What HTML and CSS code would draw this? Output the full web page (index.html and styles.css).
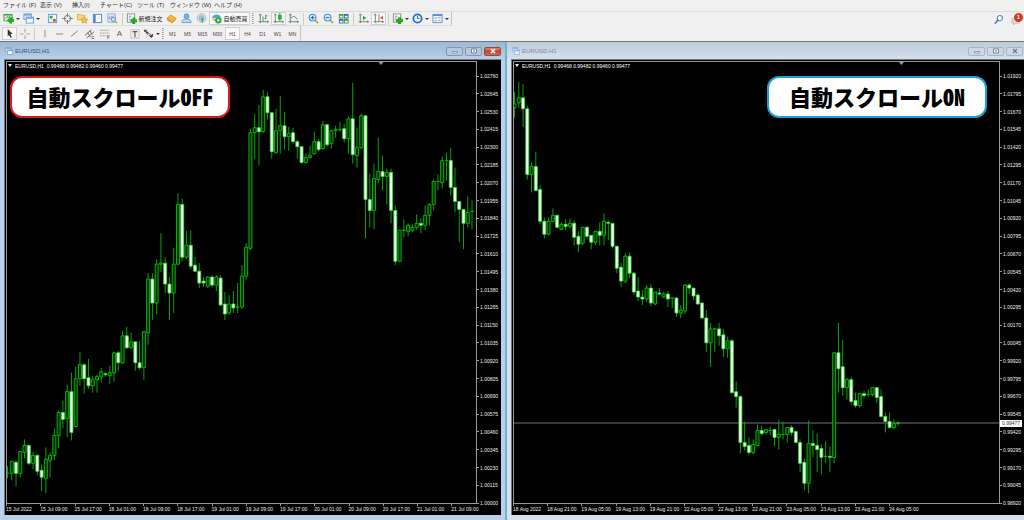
FILE: index.html
```html
<!DOCTYPE html>
<html lang="ja">
<head>
<meta charset="utf-8">
<title>EURUSD,H1</title>
<link rel="stylesheet" href="styles.css">
</head>
<body>
<svg class="defs" aria-hidden="true">
  <symbol id="axes" viewBox="0 0 12 12"><path d="M2.500 1v10M0.500 9.500h11M1.500 2.500l1-1.500 1 1.500M10 8.500l1.500 1-1.500 1" fill="none" stroke="#777"/></symbol>
  <symbol id="plus" viewBox="0 0 6 6"><path d="M2 0h2v2h2v2H4v2H2V4H0V2h2z" fill="#18b818" stroke="#078607" stroke-width=".5"/></symbol>
  <symbol id="doc" viewBox="0 0 12 12"><rect x="1.500" y="1" width="8" height="9" fill="#fff" stroke="#7f8c86"/><path d="M3 3.500h3M3 5.500h2M3 7.500h4" stroke="#789"/></symbol>
  <symbol id="win" viewBox="0 0 12 12"><rect x="1" y="1" width="8" height="6" fill="#e9f3ff" stroke="#6b9bd8"/><path d="M1 2h8" stroke="#6b9bd8" stroke-width="1.500"/><rect x="3.500" y="4.500" width="8" height="6.500" fill="#f6faff" stroke="#6b9bd8"/><path d="M3.500 5.500h8" stroke="#6b9bd8" stroke-width="1.500"/></symbol>
</svg>
<header class="bars">
  <nav class="menu">
    <button>ファイル (F)</button><button>表示 (V)</button><button>挿入(I)</button><button>チャート(C)</button><button>ツール (T)</button><button>ウィンドウ (W)</button><button>ヘルプ (H)</button>
  </nav>
  <div class="row">
    <div class="tools tools-main">
      <button class="tool drop" aria-label="新規チャート"><svg class="ic" viewBox="0 0 12 12"><rect x="1" y="1.500" width="9" height="7" fill="#dff0dc" stroke="#4a9a52"/><path d="M1 2h9" stroke="#4a9a52" stroke-width="1.500"/><path d="M2.500 6l2-2 1.500 1 2-2" fill="none" stroke="#2a8a35"/><use href="#plus" x="5" y="4.500" width="7" height="7"/></svg></button>
      <button class="tool drop" aria-label="プロファイル"><svg class="ic"><use href="#win"/></svg></button>
      <span class="gap"></span>
      <button class="tool" aria-label="気配値"><svg class="ic" viewBox="0 0 12 12"><rect x="1.500" y="1.500" width="9" height="9" fill="#eef6ff" stroke="#5b9bd5"/><path d="M3 3h3v3H3z" fill="#22ad36"/><path d="M6.500 6.500h3v3h-3z" fill="#e0492c"/></svg></button>
      <button class="tool" aria-label="データウィンドウ"><svg class="ic" viewBox="0 0 12 12"><circle cx="6" cy="6" r="3.500" fill="none" stroke="#777"/><path d="M6 0v4.500M6 7.500V12M0 6h4.500M7.500 6H12" stroke="#777"/></svg></button>
      <button class="tool" aria-label="ナビゲーター"><svg class="ic" viewBox="0 0 12 12"><path d="M0.500 1.500h3l1 1h4v5h-8z" fill="#f8da70" stroke="#c99b28" stroke-width=".7"/><path d="M8 4l1.200 2.500 2.600.3-1.900 1.800.5 2.600L8 9.900l-2.400 1.300.5-2.600-1.900-1.800 2.600-.3z" fill="#f9c92e" stroke="#bd8813" stroke-width=".6"/></svg></button>
      <button class="tool" aria-label="ターミナル"><svg class="ic" viewBox="0 0 12 12"><rect x="1.500" y="1.500" width="9" height="9" fill="#fff" stroke="#4e7fc2"/><path d="M3 2v8" stroke="#4e7fc2" stroke-width="2"/><path d="M6 4h3M6 6h3" stroke="#b8cdea" stroke-width=".7"/></svg></button>
      <button class="tool" aria-label="ストラテジーテスター"><svg class="ic" viewBox="0 0 12 12"><rect x="1" y="1" width="8" height="9" fill="#e8f1fa" stroke="#86a9cf"/><path d="M2.500 7V4M4.500 7V3M6.500 6V3" stroke="#6a8fb8"/><circle cx="7" cy="7" r="2.300" fill="#cfe6fa" stroke="#5f86b5"/><path d="M8.500 8.500l2.500 2.500" stroke="#d7a52d" stroke-width="1.500"/></svg></button>
      <span class="sep"></span>
      <button class="tool label order"><svg class="ic" viewBox="0 0 12 12"><use href="#doc"/><use href="#plus" x="5" y="5" width="7" height="7"/></svg>新規注文</button>
      <button class="tool" aria-label="MetaEditor"><svg class="ic" viewBox="0 0 12 12"><path d="M1 6l4-4 6 4-4 4z" fill="#f4bd38" stroke="#bd7c0a" stroke-width=".7"/><path d="M1 6v1.800l6 3.400 4-4V6l-4 4z" fill="#d9922a"/></svg></button>
      <button class="tool" aria-label="MQL5コミュニティ"><svg class="ic" viewBox="0 0 12 12"><circle cx="6" cy="3.500" r="2.700" fill="#6db4ec" stroke="#2f7fc4" stroke-width=".6"/><path d="M1 10.500c-.5-3 2-4 5-4s5.500 1 5 4z" fill="#b8d9f4" stroke="#5791c4" stroke-width=".8"/></svg></button>
      <button class="tool" aria-label="シグナル"><svg class="ic" viewBox="0 0 12 12"><circle cx="6" cy="5.500" r="4.700" fill="#dbe6ee" stroke="#a3b4c0"/><circle cx="6" cy="5.500" r="2.600" fill="#a5c5e2" stroke="#6b95b8" stroke-width=".6"/><path d="M6 5v6l2-2V5.500z" fill="#37b34a"/></svg></button>
      <button class="tool label auto on"><svg class="ic" viewBox="0 0 12 12"><path d="M1 5.500C2 1 9 0 11 5z" fill="#4b9fd9"/><path d="M0 5.500c4 1.500 8 1 12-.5L10.500 8 4 9z" fill="#e4b63b"/><circle cx="8" cy="8" r="3.500" fill="#1fae35"/><path d="M7 6l3 2-3 2z" fill="#fff"/></svg>自動売買</button>
      <span class="grip"></span>
      <button class="tool" aria-label="バーチャート"><svg class="ic" viewBox="0 0 12 12"><use href="#axes"/><path d="M5.500 4v5M8.500 2v5M8.500 3h1.500M7 6h1.500" stroke="#2aa045"/></svg></button>
      <button class="tool on" aria-label="ローソク足"><svg class="ic" viewBox="0 0 12 12"><use href="#axes"/><path d="M7.500 0v9" stroke="#168b20"/><rect x="5.500" y="2" width="4" height="5" fill="#1fb52e"/></svg></button>
      <button class="tool" aria-label="ラインチャート"><svg class="ic" viewBox="0 0 12 12"><use href="#axes"/><path d="M3 6c3-4 5-2 7 1" fill="none" stroke="#2aa045"/></svg></button>
      <span class="sep"></span>
      <button class="tool" aria-label="拡大"><svg class="ic" viewBox="0 0 12 12"><path d="M7.500 7.500l3.500 3.500" stroke="#d5a531" stroke-width="2"/><circle cx="5" cy="5" r="3.700" fill="#d8efff" stroke="#4b8fd0" stroke-width="1.200"/><path d="M5 3v4M3 5h4" stroke="#2470b8" stroke-width="1.200"/></svg></button>
      <button class="tool" aria-label="縮小"><svg class="ic" viewBox="0 0 12 12"><path d="M7.500 7.500l3.500 3.500" stroke="#d5a531" stroke-width="2"/><circle cx="5" cy="5" r="3.700" fill="#d8efff" stroke="#4b8fd0" stroke-width="1.200"/><path d="M3 5h4" stroke="#2470b8" stroke-width="1.200"/></svg></button>
      <button class="tool" aria-label="整列"><svg class="ic" viewBox="0 0 12 12"><path d="M1 1h5v5H1zM6.500 6.500h5v5h-5z" fill="#3fa43c"/><path d="M6.500 1h5v5h-5zM1 6.500h5v5H1z" fill="#3868c8"/><path d="M2 3h3v2H2zM7.500 3h3v2h-3zM2 8.500h3v2H2zM7.500 8.500h3v2h-3z" fill="#e9f4ee"/></svg></button>
      <span class="sep"></span>
      <button class="tool" aria-label="自動スクロール"><svg class="ic" viewBox="0 0 12 12"><use href="#axes"/><path d="M5.500 3l3.500 2.500L5.500 8z" fill="#25a53a"/></svg></button>
      <button class="tool on" aria-label="チャートシフト"><svg class="ic" viewBox="0 0 12 12"><use href="#axes"/><path d="M6.500 1v8" stroke="#777"/><path d="M11 3L7.500 5.500 11 7z" fill="#d84a37"/></svg></button>
      <span class="sep"></span>
      <button class="tool drop" aria-label="インディケータ"><svg class="ic" viewBox="0 0 12 12"><use href="#doc"/><use href="#plus" x="4.500" y="4.500" width="7.500" height="7.500"/></svg></button>
      <button class="tool drop" aria-label="時間軸"><svg class="ic" viewBox="0 0 12 12"><circle cx="6" cy="6" r="4.500" fill="#e6f3ff" stroke="#2573c4" stroke-width="2"/><path d="M6 3v3h2" fill="none" stroke="#357"/></svg></button>
      <button class="tool drop" aria-label="定型チャート"><svg class="ic" viewBox="0 0 12 12"><rect x="1" y="1.500" width="10" height="9" fill="#f2f8ff" stroke="#5c8fd0"/><path d="M1 2.500h10" stroke="#5c8fd0" stroke-width="1.500"/><path d="M2.500 5.500h3M6.500 5h3M2.500 8.500h3M6.500 8h3" stroke="#7fa3c8"/></svg></button>
    </div>
    <div class="status">
      <button class="tool" aria-label="検索"><svg class="ic" viewBox="0 0 12 12"><circle cx="7.500" cy="4.500" r="2.800" fill="#fff" stroke="#4c7fe0" stroke-width="1.200"/><path d="M5.500 6.500L2 10.500" stroke="#3d6bd2" stroke-width="1.600"/></svg></button>
      <button class="tool chat" aria-label="通知"><svg class="ic" viewBox="0 0 12 12"><path d="M1 5h8v5H5l-2 2v-2H1z" fill="#dadada" stroke="#aaa" stroke-width=".6"/></svg><span class="badge">1</span></button>
    </div>
  </div>
  <div class="row">
    <div class="tools tools-draw">
      <button class="tool on" aria-label="カーソル"><svg class="ic" viewBox="0 0 12 12"><path d="M4 1l5.500 5.500H7l1.500 3.500-1.500.7L5.500 7.500 4 9z" fill="#333"/></svg></button>
      <button class="tool" aria-label="クロスヘア"><svg class="ic" viewBox="0 0 12 12"><path d="M6.500 1v4M6.500 8v4M1 6.500h4M8 6.500h4" stroke="#999"/></svg></button>
      <span class="sep"></span>
      <button class="tool" aria-label="垂直線"><svg class="ic" viewBox="0 0 12 12"><path d="M6.500 2v8" stroke="#888"/></svg></button>
      <button class="tool" aria-label="水平線"><svg class="ic" viewBox="0 0 12 12"><path d="M2 6.500h8" stroke="#888"/></svg></button>
      <button class="tool" aria-label="トレンドライン"><svg class="ic" viewBox="0 0 12 12"><path d="M2 9.500L9.500 3" stroke="#777"/></svg></button>
      <button class="tool" aria-label="チャネル"><svg class="ic" viewBox="0 0 12 12"><path d="M1 8l7-6M3 11l8-7M4 5l3 5M6.500 3l2 4" stroke="#666"/><path d="M8 9.500h3M8 11.500h3" stroke="#555" stroke-width=".8"/></svg></button>
      <button class="tool" aria-label="フィボナッチ"><svg class="ic" viewBox="0 0 12 12"><path d="M1 2.500h10M1 5.500h10M1 8.500h7" stroke="#888" stroke-dasharray="1 .6"/><path d="M9.500 8v4M9.500 8.500h2M9.500 10h2" stroke="#666" stroke-width=".8"/></svg></button>
      <button class="tool glyph">A</button>
      <button class="tool" aria-label="ラベル"><svg class="ic" viewBox="0 0 12 12"><rect x="2" y="2" width="9" height="9" fill="none" stroke="#999" stroke-dasharray="1 1"/><path d="M4 4h5M6.500 4v6" stroke="#555" stroke-width="1.200"/></svg></button>
      <button class="tool drop" aria-label="矢印"><svg class="ic" viewBox="0 0 12 12"><path d="M1 2h3v2h2v2H3V4H1zM6 8h3l2-2v3l-2 2z" fill="#444"/><path d="M4 8l2-2 3 1" fill="none" stroke="#666"/></svg></button>
      <span class="grip"></span>
      <button class="tool tf">M1</button><button class="tool tf">M5</button><button class="tool tf">M15</button><button class="tool tf">M30</button><button class="tool tf on">H1</button><button class="tool tf">H4</button><button class="tool tf">D1</button><button class="tool tf">W1</button><button class="tool tf">MN</button>
    </div>
  </div>
</header>
<main class="desk">
  <section class="window active">
    <div class="title"><svg class="ticon"><use href="#win"/></svg><h2>EURUSD,H1</h2>
      <div class="controls"><button aria-label="最小化"><svg viewBox="0 0 8 6"><path d="M1.500 3.500h5v1.500h-5z" fill="#fff" stroke="#667" stroke-width=".6"/></svg></button><button aria-label="最大化"><svg viewBox="0 0 8 6"><path d="M1.500 1h5v4h-5z" fill="#fff" stroke="#667" stroke-width=".8"/><path d="M3 3h2" stroke="#667"/></svg></button><button class="close" aria-label="閉じる"><svg viewBox="0 0 8 6"><path d="M2 1l4 4M6 1L2 5" stroke="#fff" stroke-width="1.500"/></svg></button></div>
    </div>
    <div class="chart">
      <div class="plot">
        <svg id="chart-off" class="candles" viewBox="6 61 471 443" preserveAspectRatio="none"><path d="M379 61h5l-2.500 3z" fill="#8a9bb0"/></svg>
        <div class="over"><p class="quote"><i></i>EURUSD,H1&nbsp; 0.99468 0.99482 0.99460 0.99477</p>
        <p class="callout off">自動スクロール<span>OFF</span></p></div>
      </div>
      <div class="prices"><span>1.02760</span><span>1.02645</span><span>1.02530</span><span>1.02415</span><span>1.02300</span><span>1.02185</span><span>1.02070</span><span>1.01955</span><span>1.01840</span><span>1.01725</span><span>1.01610</span><span>1.01495</span><span>1.01380</span><span>1.01265</span><span>1.01150</span><span>1.01035</span><span>1.00920</span><span>1.00805</span><span>1.00690</span><span>1.00575</span><span>1.00460</span><span>1.00345</span><span>1.00230</span><span>1.00115</span><span>1.00000</span></div>
      <div class="times"><span>15 Jul 2022</span><span>15 Jul 09:00</span><span>15 Jul 17:00</span><span>18 Jul 01:00</span><span>18 Jul 09:00</span><span>18 Jul 17:00</span><span>19 Jul 01:00</span><span>19 Jul 09:00</span><span>19 Jul 17:00</span><span>20 Jul 01:00</span><span>20 Jul 09:00</span><span>20 Jul 17:00</span><span>21 Jul 01:00</span><span>21 Jul 09:00</span></div>
    </div>
  </section>
  <section class="window idle">
    <div class="title"><svg class="ticon"><use href="#win"/></svg><h2>EURUSD,H1</h2>
      <div class="controls"><button aria-label="最小化"><svg viewBox="0 0 8 6"><path d="M1.500 3.500h5v1.500h-5z" fill="#fff" stroke="#667" stroke-width=".6"/></svg></button><button aria-label="最大化"><svg viewBox="0 0 8 6"><path d="M1.500 1h5v4h-5z" fill="#fff" stroke="#667" stroke-width=".8"/><path d="M3 3h2" stroke="#667"/></svg></button><button aria-label="閉じる"><svg viewBox="0 0 8 6"><path d="M2 1l4 4M6 1L2 5" stroke="#778" stroke-width="1.200"/></svg></button></div>
    </div>
    <div class="chart">
      <div class="plot">
        <svg id="chart-on" class="candles" viewBox="512 61 487 443" preserveAspectRatio="none"><path d="M898.500 61h5l-2.500 3z" fill="#8a9bb0"/><path d="M512 423.500h487" stroke="#707988"/></svg>
        <div class="over"><p class="quote"><i></i>EURUSD,H1&nbsp; 0.99468 0.99482 0.99460 0.99477</p>
        <p class="callout live">自動スクロール<span>ON</span></p></div>
      </div>
      <div class="prices"><span>1.01920</span><span>1.01795</span><span>1.01670</span><span>1.01545</span><span>1.01420</span><span>1.01295</span><span>1.01170</span><span>1.01045</span><span>1.00920</span><span>1.00795</span><span>1.00670</span><span>1.00545</span><span>1.00420</span><span>1.00295</span><span>1.00170</span><span>1.00045</span><span>0.99920</span><span>0.99795</span><span>0.99670</span><span>0.99545</span><span>0.99420</span><span>0.99295</span><span>0.99170</span><span>0.99045</span><span>0.98920</span><b class="now">0.99477</b></div>
      <div class="times"><span>18 Aug 2022</span><span>18 Aug 21:00</span><span>19 Aug 05:00</span><span>19 Aug 13:00</span><span>19 Aug 21:00</span><span>22 Aug 05:00</span><span>22 Aug 13:00</span><span>22 Aug 21:00</span><span>23 Aug 05:00</span><span>23 Aug 13:00</span><span>23 Aug 21:00</span><span>24 Aug 05:00</span></div>
    </div>
  </section>
</main>
<script src="chart.js"></script>
</body>
</html>
```
FILE: styles.css
```css
* { box-sizing: border-box; }
body {
  margin: 0;
  height: 100vh;
  display: grid;
  grid-template-rows: auto minmax(0, 1fr);
  overflow: hidden;
  background: #f0f0f0;
  font-family: "Liberation Sans", "Noto Sans CJK JP", sans-serif;
  font-size: 6px;
  color: #333;
}
p, h2 { margin: 0; font: inherit; }
button { border: 0; padding: 0; background: none; font: inherit; color: inherit; white-space: nowrap; }
.defs { position: absolute; width: 0; height: 0; }

.bars { border-bottom: 1px solid #777; }
.menu {
  display: grid;
  grid-template-columns: 37px 32px 28px 37px 33px 44px auto;
  height: 12px;
  padding-left: 3px;
  border-bottom: 1px solid #dcdcdc;
}
.menu button { justify-self: start; line-height: 11px; }
.row { display: flex; justify-content: space-between; height: 14px; }
.row + .row { height: 15px; }
.tools { display: flex; align-items: center; padding-left: 2px; border-right: 1px solid #c4c4c4; }
.tools-main { border-bottom: 1px solid #dcdcdc; }
.tool { display: flex; align-items: center; justify-content: center; flex: none; width: 15px; height: 13px; position: relative; }
.ic { width: 11px; height: 11px; flex: none; }
.on { background: #f9f9f9; border: 1px solid #d0d0d0; }
.drop { width: 20px; justify-content: flex-start; gap: 2px; padding-left: 1px; }
.drop::after { content: ""; border: 2px solid transparent; border-top-color: #333; border-bottom: 0; }
.label { gap: 1px; font-size: 6px; color: #222; }
.order { width: 39px; }
.auto { width: 41px; }
.gap { width: 3px; }
.sep { width: 1px; height: 12px; margin: 0 2px; background: #ccc; }
.grip { width: 2px; height: 11px; margin: 0 2px; border-left: 1px dotted #999; border-right: 1px dotted #bbb; }
.tools-draw .grip { margin: 0 1px 0 0; }
.tf { font-size: 5px; color: #444; }
.glyph { font-size: 8px; color: #555; }
.status { display: flex; align-items: center; gap: 3px; }
.badge { position: absolute; top: 0; right: 1px; width: 9px; height: 9px; border-radius: 50%; background: #dc351c; color: #fff; font-size: 6px; line-height: 9px; font-weight: bold; text-align: center; }

.desk { display: grid; grid-template-columns: 507fr 517fr; min-height: 0; background: #a0a0a0; }
.window { display: flex; flex-direction: column; min-width: 0; padding: 1px 4px 5px; }
.active { background: linear-gradient(#9bb7d3, #b9d1ea 18px); border-right: 2px solid #6fb2cb; }
.idle { background: linear-gradient(#bccbda, #d5e1ef 18px); padding-right: 0; }
.title { display: flex; align-items: center; height: 16px; gap: 2px; padding-left: 1px; flex: none; }
.title h2 { flex: 1; color: #36506e; }
.idle .title h2 { color: #7d8b9b; }
.ticon { width: 8px; height: 8px; }
.ticon use { width: 8px; height: 8px; }
.idle .ticon { opacity: .7; }
.controls { display: flex; gap: 2px; }
.controls button { width: 17px; height: 9px; border: 1px solid #7f97b2; border-radius: 2px; background: #b5cae0; display: grid; place-items: center; }
.idle .controls button { background: #cbd8e6; border-color: #a7b5c6; }
.idle .controls { padding-right: 1px; }
.controls svg { width: 8px; height: 6px; }
.controls .close { background: linear-gradient(#dc8373, #c4432a 50%, #d16b50); border-color: #8c4a45; }

.chart {
  flex: 1;
  min-height: 0;
  display: grid;
  grid-template-columns: minmax(0, 1fr) 24px;
  grid-template-rows: minmax(0, 1fr) 11px;
  background: #000;
  border-left: 1px solid #777;
  border-top: 1px solid #777;
  padding: 1px 0 0 1px;
  color: #eee;
  font-size: 5px;
  line-height: 6px;
}
.plot { display: grid; border: 1px solid #999; min-height: 0; }
.plot > * { grid-area: 1 / 1; min-width: 0; min-height: 0; }
.candles { width: 100%; height: 100%; }
.over { display: flex; flex-direction: column; align-items: flex-start; padding-left: 3px; gap: 7px; position: relative; }
.quote { display: flex; align-items: center; gap: 3px; height: 7px; color: #fff; }
.quote i { border: 2px solid transparent; border-top: 3px solid #eee; border-bottom: 0; margin-left: -2px; }
.callout {
  width: 220px;
  height: 42px;
  border: 2px solid #e31414;
  border-radius: 12px;
  background: #fff;
  color: #000;
  font: 900 22px/36px "Noto Sans CJK JP", sans-serif;
  text-align: center;
  white-space: nowrap;
}
.callout span { font-feature-settings: "hwid"; }
.live { border-color: #1ba1d6; align-self: flex-end; margin-right: 12px; }
.prices { grid-row: 1 / 3; grid-column: 2; display: flex; flex-direction: column; justify-content: space-between; padding: 12px 0 9px; position: relative; }
.prices span { display: flex; align-items: center; gap: 1px; }
.prices span::before { content: ""; width: 2px; height: 1px; background: #999; }
.now { position: absolute; top: 79%; left: 0; padding: 0 2px; background: #fff; color: #333; font-weight: normal; line-height: 7px; }
.times { grid-row: 2; grid-column: 1 / 3; display: grid; grid-template-columns: repeat(13, 20fr) 29fr; white-space: nowrap; }
.idle .times { grid-template-columns: repeat(11, 20fr) 79fr; }
.times span { min-width: 0; }
.times span::before { content: ""; display: block; width: 1px; height: 2px; background: #999; }
```
FILE: chart.js
```js
// One candle per entry: high, low, body top, body bottom; a trailing "w" marks a falling candle.
const STEP = 4.28;
const series = {
  "chart-off": { start: 6.5, data: `467 478 474 474,462 480 462 474,461 486 463 474w,452 477 452 474,440 458 446 453,445 465 446 464w,452 469 456 464,455 475 456 472w,465 491 471 478w,448 493 460 479,453 477 456 461,429 460 436 456,411 448 413 436,401 428 413 420w,385 437 392 419,373 440 392 433w,367 427 379 427,352 385 365 379,364 393 365 379w,359 388 378 386w,376 392 380 386,375 392 377 380,368 382 372 377,373 376 374 375w,366 383 373 376,352 381 353 373,351 370 353 363w,331 363 336 363,327 348 336 348w,333 348 342 348,342 370 342 363w,341 369 363 368w,331 379 332 368,273 344 279 333,273 319 279 303w,259 313 264 303,233 271 263 264,257 292 263 284w,277 319 284 293w,248 312 264 293,193 264 204 264,198 260 204 257w,231 258 245 257,230 268 245 266w,257 271 265 271w,263 287 271 283w,277 286 281 283w,276 287 277 286,275 286 277 285w,275 290 277 285,275 305 278 305w,292 319 304 314w,295 314 304 313,291 312 304 308w,283 312 307 307,265 308 276 307,243 279 247 276,128 249 132 248,113 157 127 132,104 164 127 131w,89 131 96 131,91 118 96 112w,111 157 112 151w,108 152 130 152,95 152 125 130,111 148 125 136w,126 149 133 136,127 142 132 141w,139 157 141 146w,146 162 146 162w,153 162 157 162,145 157 155 157,131 153 141 153,138 150 141 149w,120 148 124 148,123 145 124 144w,129 147 130 143,125 136 129 130,121 130 129 129,123 141 128 138w,116 152 118 138,82 162 118 154w,127 166 147 155,113 148 115 147,115 237 115 199w,173 226 199 210w,163 228 178 210,137 182 171 179,155 189 171 176w,168 203 172 176,168 222 172 210w,205 264 210 261w,230 261 230 261,219 236 230 230,223 235 225 231,224 231 227 230,214 229 223 227,218 232 223 225w,205 229 215 225,203 224 204 215,179 209 181 204,174 189 181 181,156 187 160 182,152 179 160 160,147 194 160 187w,167 211 187 201w,201 241 201 209w,209 248 209 223w,196 226 212 223,200 228 211 211` },
  "chart-on": { start: 512.5, data: `91 116 103 107,81 106 97 102,83 125 97 108w,105 178 108 174w,162 191 166 174,151 190 166 190w,185 223 189 221w,217 237 221 234w,217 234 221 234,208 221 215 221,215 227 215 227w,222 229 224 229,219 229 224 226w,218 227 223 226,220 244 223 237w,231 251 236 244w,227 244 227 243,226 238 227 236w,235 248 235 242w,231 244 231 242,222 244 231 235w,213 244 221 235,220 239 222 223w,223 247 223 246w,246 272 246 268w,263 286 267 281w,253 282 256 281,252 277 256 273w,272 294 273 292w,277 300 291 297w,290 304 297 299w,285 301 288 299,284 305 288 303w,292 304 292 304,288 294 293 294w,292 297 294 297,291 306 294 299w,298 307 298 298,297 316 298 313w,305 317 310 313,284 313 285 311,283 293 285 288w,288 299 288 296w,293 304 295 304w,303 318 303 318w,310 351 318 343w,323 366 329 343,329 351 329 329,323 345 329 336w,329 356 335 349w,337 357 341 349,339 393 341 393w,382 407 392 397w,396 453 397 443w,422 450 443 447w,438 455 446 453w,440 454 445 453,425 446 431 446,426 435 431 434w,430 434 430 433,427 435 431 431,430 446 430 438w,420 449 435 438,422 439 435 435,428 442 428 435,426 435 428 433w,431 443 432 443w,440 472 443 464w,459 490 463 484w,421 493 444 484,431 457 444 446w,434 472 446 450w,445 474 449 458w,442 463 457 457,447 472 457 458w,352 463 353 458,323 392 353 369w,340 395 367 388w,378 399 380 388,377 404 380 402w,393 407 401 406w,394 407 394 406,391 398 394 396w,390 396 395 395,388 396 388 395,388 402 388 398w,390 417 397 417w,413 432 417 422w,413 428 422 428w,420 429 424 428,422 425 423 424` }
};
const NS = "http://www.w3.org/2000/svg";
for (const [id, { start, data }] of Object.entries(series)) {
  const svg = document.getElementById(id);
  let wicks = "", rising = "", falling = "";
  data.split(",").forEach((entry, i) => {
    const [high, low, top, bottom] = entry.split(" ").map(parseFloat);
    const x = start + i * STEP;
    wicks += `M${x} ${high}V${low + 1}`;
    const box = `M${x - 1.5} ${top}h3V${bottom}h-3z`;
    if (entry.endsWith("w")) falling += box; else rising += box;
  });
  for (const [cls, d] of [["wick", wicks], ["rise", rising], ["fall", falling]]) {
    const path = document.createElementNS(NS, "path");
    path.setAttribute("d", d);
    path.setAttribute("stroke", cls === "fall" ? "#35e035" : cls === "rise" ? "#00b800" : "#00a800");
    path.setAttribute("stroke-width", cls === "fall" ? ".8" : "1");
    path.setAttribute("fill", cls === "fall" ? "#f0fff0" : cls === "rise" ? "#002800" : "none");
    svg.append(path);
  }
}
```
